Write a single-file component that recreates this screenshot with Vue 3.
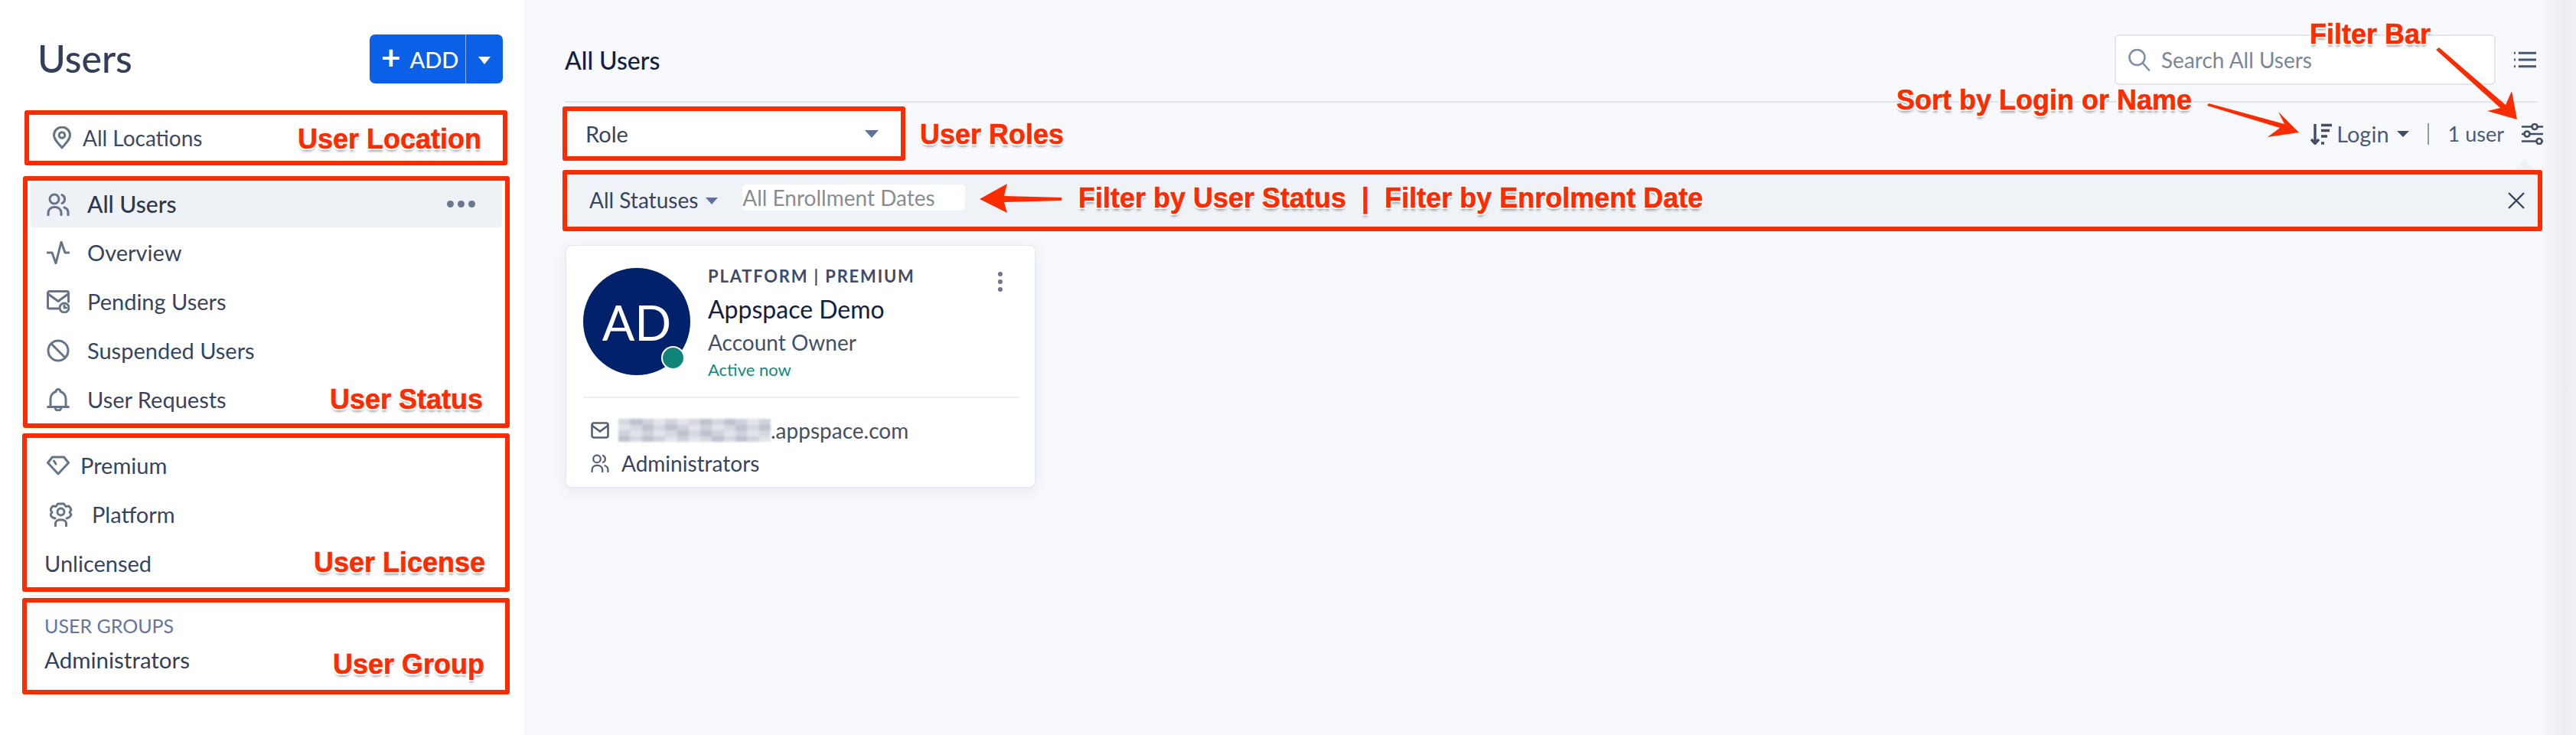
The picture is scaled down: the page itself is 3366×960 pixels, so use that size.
<template>
  <div class="page">
    <!-- Sidebar -->
    <aside class="sidebar">
      <div class="side-head">
        <h1 class="title">Users</h1>
        <div class="add-btn">
          <span class="add-main"><span class="plus">+</span>ADD</span>
          <span class="add-caret"></span>
        </div>
      </div>

      <section class="box loc-box">
        <div class="row loc-row">
          <svg class="icon pin" viewBox="0 0 26 30">
            <path d="M13 28C7 21 2.500 17 2.500 11.500a10.500 10.500 0 0 1 21 0C23.500 17 19 21 13 28z" />
            <circle cx="13" cy="11.500" r="3.800" />
          </svg>
          <span>All Locations</span>
        </div>
        <span class="note note-loc">User Location</span>
      </section>

      <section class="box status-box">
        <div
          v-for="item in statusItems"
          :key="item.name"
          :class="['row', 'status-row', { active: item.active }]"
        >
          <svg class="icon status-icon" viewBox="0 0 30 30" v-html="item.icon"></svg>
          <span class="label">{{ item.name }}</span>
          <span v-if="item.active" class="more"><i></i><i></i><i></i></span>
        </div>
        <span class="note note-status">User Status</span>
      </section>

      <section class="box license-box">
        <div class="row lic-row">
          <svg class="icon lic-icon" viewBox="0 0 30 26">
            <path d="M7.500 2h15L28.500 9.500 15 24 1.500 9.500z" />
            <path d="M9.500 7l2.500 4" />
          </svg>
          <span class="label">Premium</span>
        </div>
        <div class="row lic-row">
          <svg class="icon lic-icon plat" viewBox="0 0 30 32">
            <path d="M7 21C3 20 1.500 18 1 16L3 13 1 10C1.500 8 3 6 4 5L8 5.500 10.500 2H18.500L21 5.500 25 5C26 6 27.500 8 28 10L26 13 28 16C27.500 18 26 20 22 21" />
            <circle cx="14.500" cy="12.500" r="4.500" />
            <path d="M7.500 31v-3a5 5 0 0 1 5-5h4a5 5 0 0 1 5 5v3" />
          </svg>
          <span class="label">Platform</span>
        </div>
        <div class="row lic-row lic-plain"><span class="label">Unlicensed</span></div>
        <span class="note note-license">User License</span>
      </section>

      <div class="side-divider"></div>

      <section class="box group-box">
        <div class="group-label">USER GROUPS</div>
        <div class="group-name">Administrators</div>
        <span class="note note-group">User Group</span>
      </section>
    </aside>

    <!-- Main -->
    <main class="main">
      <header class="main-head">
        <h2 class="main-title">All Users</h2>
        <div class="search">
          <svg class="search-icon" viewBox="0 0 30 30">
            <circle cx="12.500" cy="12" r="10" />
            <path d="M20 19.500l8 9" />
          </svg>
          <span>Search All Users</span>
        </div>
        <svg class="list-icon" viewBox="0 0 30 24">
          <path d="M6 3h24M6 12h24M6 21h24" />
          <path class="list-dots" d="M0 3h2M0 12h2M0 21h2" />
        </svg>
      </header>

      <div class="toolbar">
        <div class="role-box">
          <span>Role</span>
          <span class="caret caret-role"></span>
        </div>
        <span class="note note-roles">User Roles</span>
        <div class="sort">
          <svg class="sort-icon" viewBox="0 0 28 28">
            <path d="M6 1v25M1 21l5 5.500 5-5.500" />
            <path d="M14 2.500h14M14 9.500h11M14 17h8M14 26h4" />
          </svg>
          <span class="sort-name">Login</span>
          <span class="caret caret-sort"></span>
          <span class="sep"></span>
          <span class="count">1 user</span>
          <svg class="slider-icon" viewBox="0 0 28 28">
            <path d="M0 4.500h13.500M20.500 4.500H28M0 14h3.500M10.500 14H28M0 23.500h19.500M26.500 23.500H28" />
            <circle cx="17" cy="4.500" r="3.500" />
            <circle cx="7" cy="14" r="3.500" />
            <circle cx="23" cy="23.500" r="3.500" />
          </svg>
        </div>
      </div>

      <div class="filter-box">
        <span class="filter-notch"></span>
        <span class="status-filter">All Statuses</span>
        <span class="caret caret-status"></span>
        <span class="date-input">All Enrollment Dates</span>
        <span class="note note-filter">Filter by User Status &nbsp;|&nbsp; Filter by Enrolment Date</span>
        <svg class="close-icon" viewBox="0 0 24 24">
          <path d="M2 2l20 20M22 2L2 22" />
        </svg>
      </div>

      <article class="card">
        <div class="card-top">
          <div class="avatar">
            AD
            <span class="online"></span>
          </div>
          <div class="card-info">
            <div class="license">PLATFORM | PREMIUM</div>
            <div class="name">Appspace Demo</div>
            <div class="role">Account Owner</div>
            <div class="active-now">Active now</div>
          </div>
          <span class="kebab"><i></i><i></i><i></i></span>
        </div>
        <div class="card-bottom">
          <div class="card-line">
            <svg class="line-icon" viewBox="0 0 24 22">
              <rect x="1.500" y="1.500" width="21" height="19" rx="2.500" />
              <path d="M2 5l10 7.500L22 5" />
            </svg>
            <span class="blur-mail">
              <i v-for="(c, i) in blurCells" :key="i" :style="{ background: c }"></i>
            </span>
            <span>.appspace.com</span>
          </div>
          <div class="card-line line-admin">
            <svg class="line-icon" viewBox="0 0 30 30" v-html="peopleIcon"></svg>
            <span>Administrators</span>
          </div>
        </div>
      </article>
    </main>

    <!-- Annotations drawn over the screenshot -->
    <span class="note note-bar">Filter Bar</span>
    <span class="note note-sort">Sort by Login or Name</span>
    <svg class="arrows" viewBox="0 0 3366 960">
      <path d="M3183 65L3187 62 3274 137 3282 119 3289 156 3250 145 3267 141z" />
      <path d="M2884 138L2886 135 2985 162 2977 146 3004 173 2963 179 2979 167z" />
      <path d="M1387 258L1312 256 1316 240 1280 260 1316 278 1312 264 1387 262z" />
    </svg>
  </div>
</template>

<script setup>
const peopleIcon =
  '<circle cx="10" cy="8" r="6" /><path d="M20 2.500a6 6 0 0 1 0 11" /><path d="M2 29v-3a7.500 7.500 0 0 1 7.500-7.500h2a7.500 7.500 0 0 1 7.500 7.500v3" /><path d="M23 19a7 7 0 0 1 5 7v3" />'

const statusItems = [
  { name: 'All Users', active: true, icon: peopleIcon },
  {
    name: 'Overview',
    icon: '<path d="M1 15h6l5 14 7-28 5 14h5" />',
  },
  {
    name: 'Pending Users',
    icon: '<path d="M15 24H3.500A2 2 0 0 1 1.500 22V3.500a2 2 0 0 1 2-2h23a2 2 0 0 1 2 2V15" /><path d="M2 5l13 9.500L28 5" /><circle cx="23" cy="23" r="6" /><path d="M23 20v3h2.500" />',
  },
  {
    name: 'Suspended Users',
    icon: '<circle cx="15" cy="15" r="13" /><path d="M6 6l18 18" />',
  },
  {
    name: 'User Requests',
    icon: '<path d="M1.500 24.500h27" /><path d="M5 24.500V14a10 10 0 0 1 7-9.500 3 3 0 0 1 6 0A10 10 0 0 1 25 14v10.500" /><path d="M11 25a4 4 0 0 0 8 0" />',
  },
]

// pixelated block hiding the address in the reference
const blurShades = ['#d6d8e0', '#c3c6d1', '#e2e4ea', '#b4b8c5', '#cfd2db', '#eceef2', '#bfc2ce', '#dadce3']
const blurCells = Array.from({ length: 52 }, (_, i) => blurShades[(i * 5 + (i % 4)) % blurShades.length])
</script>

<style>
html,
body {
  margin: 0;
  background: #f8f9fc;
}
</style>

<style scoped>
.page {
  position: relative;
  display: flex;
  width: 3366px;
  height: 960px;
  overflow: hidden;
  font-family: Lato, "Liberation Sans", sans-serif;
  color: #2f3b55;
}

.sidebar {
  box-sizing: border-box;
  width: 687px;
  flex: none;
  height: 960px;
  padding: 45px 20px 0 29px;
  background: #fff;
  border-right: 1px solid #eef0f5;
}

.side-head {
  display: flex;
  align-items: center;
  justify-content: space-between;
  height: 64px;
  padding: 0 9px 0 20px;
}

.title {
  margin: 0 0 2px;
  font-size: 50px;
  font-weight: 500;
  color: #333f58;
}

.add-btn {
  display: flex;
  width: 174px;
  height: 64px;
  background: #0b60e8;
  border-radius: 7px;
  color: #fff;
}

.add-main {
  display: flex;
  align-items: center;
  width: 126px;
  padding-left: 15px;
  box-sizing: border-box;
  border-right: 1px solid #8db4f4;
  font-size: 29px;
  font-weight: 500;
}

.plus {
  margin-right: 12px;
  font-size: 44px;
  font-weight: 700;
  line-height: 1;
  margin-top: -6px;
}

.add-caret {
  margin: 29px 0 0 16px;
  border-style: solid;
  border-width: 10px 8px 0;
  border-color: #fff transparent transparent;
  height: 0;
}

.box {
  position: relative;
  box-sizing: border-box;
  border: 6px solid #fb2c00;
  border-radius: 3px;
}

.row {
  display: flex;
  align-items: center;
  font-size: 29px;
}

.label {
  margin-top: -2px;
}

.icon {
  flex: none;
  fill: none;
  stroke: #667489;
  stroke-width: 3;
  stroke-linecap: round;
  stroke-linejoin: round;
}

.loc-box {
  height: 72px;
  margin: 35px 3px 0;
}

.loc-row {
  height: 60px;
  padding-left: 30px;
  font-size: 28px;
  color: #3d4960;
}

.pin {
  width: 26px;
  height: 30px;
  margin-right: 14px;
}

.status-box {
  height: 329px;
  margin: 14px 0 0 1px;
}

.status-row {
  box-sizing: border-box;
  height: 64px;
  margin: 0 4px;
  padding-left: 21px;
  color: #38445d;
}

.status-row.active {
  height: 61px;
  margin-bottom: 1px;
  background: #eef1f6;
  border-radius: 0 0 5px 5px;
  font-size: 30px;
  font-weight: 500;
  color: #2b3650;
}

.status-icon {
  width: 30px;
  height: 30px;
  margin-right: 23px;
}

.more {
  display: flex;
  gap: 5px;
  margin-left: auto;
  margin-right: 35px;
}

.more i {
  width: 9px;
  height: 9px;
  border-radius: 50%;
  background: #6b778c;
}

.license-box {
  height: 207px;
  margin-top: 7px;
  padding-top: 4px;
}

.lic-row {
  height: 64px;
  padding-left: 26px;
  color: #38445d;
}

.lic-icon {
  width: 30px;
  height: 28px;
  margin-right: 14px;
}

.lic-icon.plat {
  height: 32px;
  margin: 0 25px 0 4px;
}

.lic-plain {
  padding-left: 23px;
}

.side-divider {
  height: 2px;
  margin: 4px 10px 0 9px;
  background: #eceef2;
}

.group-box {
  height: 126px;
  margin-top: 2px;
  padding: 16px 0 0 23px;
}

.group-label {
  font-size: 25px;
  line-height: 28px;
  color: #6476a0;
}

.group-name {
  margin-top: 15px;
  font-size: 29.500px;
  line-height: 32px;
  color: #33405a;
}

/* red callouts */
.note {
  position: absolute;
  font-family: "Liberation Sans", Arial, sans-serif;
  font-size: 36px;
  font-weight: 700;
  line-height: 40px;
  white-space: nowrap;
  color: #fb2c00;
  -webkit-text-stroke: 0.600px #fb2c00;
  text-shadow: -2px -1px 0 #fff, 2px -1px 0 #fff, -2px 2px 0 #fff, 2px 2px 0 #fff, 0 4px 3px rgba(90, 90, 90, 0.5);
}

.note-loc {
  left: 351px;
  top: 12px;
}

.note-status {
  left: 395px;
  top: 266px;
}

.note-license {
  left: 375px;
  top: 143px;
}

.note-group {
  left: 400px;
  top: 61px;
}

.main {
  box-sizing: border-box;
  flex: 1;
  height: 960px;
  padding: 46px 50px 0 51px;
  background: linear-gradient(to right, #f8f9fc calc(100% - 50px), #eceef3 calc(100% - 16px), #eef0f4);
}

.main-head {
  display: flex;
  align-items: center;
  height: 88px;
  box-sizing: border-box;
  padding: 0 2px 22px 0;
  border-bottom: 2px solid #e1e4ee;
}

.main-title {
  flex: 1;
  margin: 0;
  font-size: 32px;
  font-weight: 500;
  color: #13203d;
}

.search {
  display: flex;
  align-items: center;
  box-sizing: border-box;
  width: 498px;
  height: 66px;
  padding-left: 15px;
  background: #fff;
  border: 2px solid #e2e5ec;
  border-radius: 6px;
  font-size: 28px;
  color: #7d8698;
}

.search-icon {
  width: 30px;
  height: 30px;
  margin-right: 14px;
  fill: none;
  stroke: #7f8fa9;
  stroke-width: 2.600;
  stroke-linecap: round;
}

.list-icon {
  width: 29px;
  height: 24px;
  margin-left: 24px;
  fill: none;
  stroke: #4a566c;
  stroke-width: 3;
}

.toolbar {
  display: flex;
  position: relative;
  align-items: center;
  height: 71px;
  margin: 5px 0 0 -3px;
}

.role-box {
  display: flex;
  align-items: center;
  justify-content: space-between;
  box-sizing: border-box;
  width: 448px;
  height: 71px;
  padding: 0 30px 0 24px;
  background: #fff;
  border: 6px solid #fb2c00;
  border-radius: 3px;
  font-size: 29px;
  color: #38445d;
}

.caret {
  width: 0;
  height: 0;
  border-style: solid;
  border-color: #5f719c transparent transparent;
}

.caret-role {
  border-width: 10px 9px 0;
  margin-right: -1px;
}

.note-roles {
  left: 467px;
  top: 17px;
}

.sort {
  display: flex;
  align-items: center;
  margin-left: auto;
  margin-right: -7px;
  font-size: 29px;
  color: #4c5a77;
}

.sort-icon {
  width: 28px;
  height: 28px;
  margin-right: 6px;
  fill: none;
  stroke: #414d66;
  stroke-width: 3.400;
}

.caret-sort {
  margin-left: 10px;
  border-width: 8px 8px 0;
  border-color: #414d66 transparent transparent;
}

.sep {
  width: 2px;
  height: 28px;
  margin: 0 25px 0 24px;
  background: #8c9ab0;
}

.count {
  font-size: 27px;
}

.slider-icon {
  width: 28px;
  height: 28px;
  margin-left: 23px;
  fill: none;
  stroke: #414d66;
  stroke-width: 2.600;
}

.filter-box {
  position: relative;
  display: flex;
  align-items: center;
  box-sizing: border-box;
  height: 80px;
  margin: 12px -6px 0 -3px;
  padding-left: 29px;
  background: #eff3f8;
  border: 6px solid #fb2c00;
  border-radius: 3px;
}

.filter-notch {
  position: absolute;
  right: 3px;
  top: -20px;
  border-style: solid;
  border-width: 0 14px 14px;
  border-color: transparent transparent #eef1f6;
}

.status-filter {
  margin-top: -2px;
  font-size: 28px;
  color: #38445d;
}

.caret-status {
  margin: 0 0 0 10px;
  border-width: 9px 8px 0;
}

.date-input {
  box-sizing: border-box;
  width: 291px;
  height: 34px;
  margin: -8px 0 0 32px;
  background: #fff;
  border-radius: 5px;
  font-size: 28px;
  line-height: 34px;
  white-space: nowrap;
  color: #8a8c92;
}

.note-filter {
  left: 668px;
  top: 11px;
}

.close-icon {
  width: 24px;
  height: 24px;
  margin-left: auto;
  margin-right: 16px;
  fill: none;
  stroke: #3a465f;
  stroke-width: 2.400;
}

.card {
  box-sizing: border-box;
  width: 614px;
  height: 317px;
  margin: 18px 0 0 1px;
  padding: 29px 20px 0 22px;
  background: #fff;
  border: 1px solid #e6e8f0;
  border-radius: 8px;
  box-shadow: 0 4px 18px rgba(70, 80, 130, 0.1);
}

.card-top {
  position: relative;
  display: flex;
  height: 168px;
  border-bottom: 2px solid #eceef2;
}

.avatar {
  position: relative;
  display: flex;
  align-items: center;
  justify-content: center;
  width: 140px;
  height: 140px;
  flex: none;
  border-radius: 50%;
  background: #01216b;
  color: #fff;
  font-size: 63px;
  font-weight: 400;
}

.online {
  position: absolute;
  right: 7px;
  bottom: 7px;
  box-sizing: border-box;
  width: 31px;
  height: 31px;
  border-radius: 50%;
  background: #0f8577;
  border: 2px solid #fff;
}

.card-info {
  margin-left: 23px;
}

.license {
  font-size: 22px;
  line-height: 22px;
  font-weight: 700;
  letter-spacing: 1.800px;
  color: #414b63;
}

.name {
  margin-top: 12px;
  font-size: 32px;
  line-height: 40px;
  color: #13203d;
}

.role {
  margin-top: 6px;
  font-size: 28px;
  line-height: 34px;
  color: #454f66;
}

.active-now {
  margin-top: 6px;
  font-size: 22px;
  line-height: 26px;
  color: #14897a;
}

.kebab {
  position: absolute;
  right: 22px;
  top: 5px;
  display: flex;
  flex-direction: column;
  gap: 4px;
}

.kebab i {
  width: 6px;
  height: 6px;
  border-radius: 50%;
  background: #6b778c;
}

.card-bottom {
  padding: 23px 0 0 10px;
  font-size: 28px;
  color: #454f66;
}

.card-line {
  display: flex;
  align-items: center;
  height: 38px;
}

.line-admin {
  margin-top: 5px;
  color: #38445d;
}

.line-icon {
  width: 24px;
  height: 22px;
  margin-right: 12px;
  fill: none;
  stroke: #565f74;
  stroke-width: 2.600;
  stroke-linecap: round;
}

.line-admin .line-icon {
  height: 24px;
  margin-right: 16px;
  stroke-width: 2.800;
}

.blur-mail {
  display: grid;
  grid-template-columns: repeat(13, 1fr);
  grid-auto-rows: 1fr;
  width: 199px;
  height: 30px;
  filter: blur(1.500px);
}

.arrows {
  position: absolute;
  inset: 0;
  width: 3366px;
  height: 960px;
  fill: #fb2c00;
  pointer-events: none;
}

.note-bar {
  left: 3018px;
  top: 25px;
}

.note-sort {
  left: 2478px;
  top: 111px;
}
</style>
